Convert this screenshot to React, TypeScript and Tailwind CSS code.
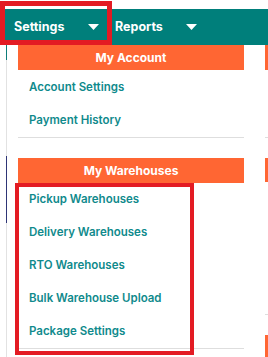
const accountLinks = ["Account Settings", "Payment History"];
const warehouseLinks = [
  "Pickup Warehouses",
  "Delivery Warehouses",
  "RTO Warehouses",
  "Bulk Warehouse Upload",
  "Package Settings",
];

function Caret() {
  return (
    <svg className="h-[6px] w-[11px]" viewBox="0 0 11 6" aria-hidden="true">
      <path d="M0 0h11L5.5 6z" fill="white" />
    </svg>
  );
}

function Header({ title }: { title: string }) {
  return (
    <div className="flex h-[25px] items-center justify-center bg-[#ff6633] text-[12px] font-bold text-white">
      {title}
    </div>
  );
}

export default function App() {
  return (
    <div className="relative h-[357px] w-[268px] overflow-hidden bg-white font-['Inter',sans-serif]">
      <nav className="mt-[9px] flex h-[36px] items-center bg-[#007f7b] text-[12.5px] font-bold text-white">
        <div className="flex w-[112px] items-center pl-[14px]">
          <span>Settings</span>
          <span className="ml-[24px]">
            <Caret />
          </span>
        </div>
        <div className="flex items-center pl-[3px]">
          <span>Reports</span>
          <span className="ml-[23px]">
            <Caret />
          </span>
        </div>
      </nav>

      <div className="flex h-[312px]">
        <div className="ml-[6px] flex w-px flex-col">
          <div className="h-[15px] bg-[#0d7d7a]" />
          <div className="h-[96px] bg-[#e2e2e2]" />
          <div className="h-[67px] bg-[#2e3576]" />
          <div className="flex-1 bg-[#e2e2e2]" />
        </div>

        <div className="ml-[11px] w-[226px]">
          <Header title="My Account" />
          <ul className="pt-px text-[11.5px] font-semibold text-[#0f8a8c]">
            {accountLinks.map((l) => (
              <li key={l} className="flex h-[33px] items-center pl-[11px]">
                {l}
              </li>
            ))}
          </ul>
          <div className="h-px bg-[#dedede]" />
          <div className="h-[20px]" />
          <Header title="My Warehouses" />
          <ul className="text-[11.5px] font-semibold text-[#0f8a8c]">
            {warehouseLinks.map((l) => (
              <li key={l} className="flex h-[33px] items-center pl-[11px]">
                {l}
              </li>
            ))}
          </ul>
          <div className="h-px bg-[#dedede]" />
        </div>

        <div className="ml-[21px] flex-1">
          <div className="h-[25px] bg-[#ff6633]" />
          <div className="h-[67px]" />
          <div className="h-px bg-[#dedede]" />
          <div className="h-[20px]" />
          <div className="h-[24px] bg-[#ff6633]" />
          <div className="h-[132px]" />
          <div className="h-px bg-[#dedede]" />
          <div className="h-[20px]" />
          <div className="h-[25px] bg-[#ff6633]" />
        </div>
      </div>

      <div className="pointer-events-none absolute left-0 top-[1px] h-[44px] w-[112px] border-[5px] border-[#e31b23]" />
      <div className="pointer-events-none absolute left-[15px] top-[183px] h-[172px] w-[179px] border-[4px] border-[#e31b23]" />
    </div>
  );
}
